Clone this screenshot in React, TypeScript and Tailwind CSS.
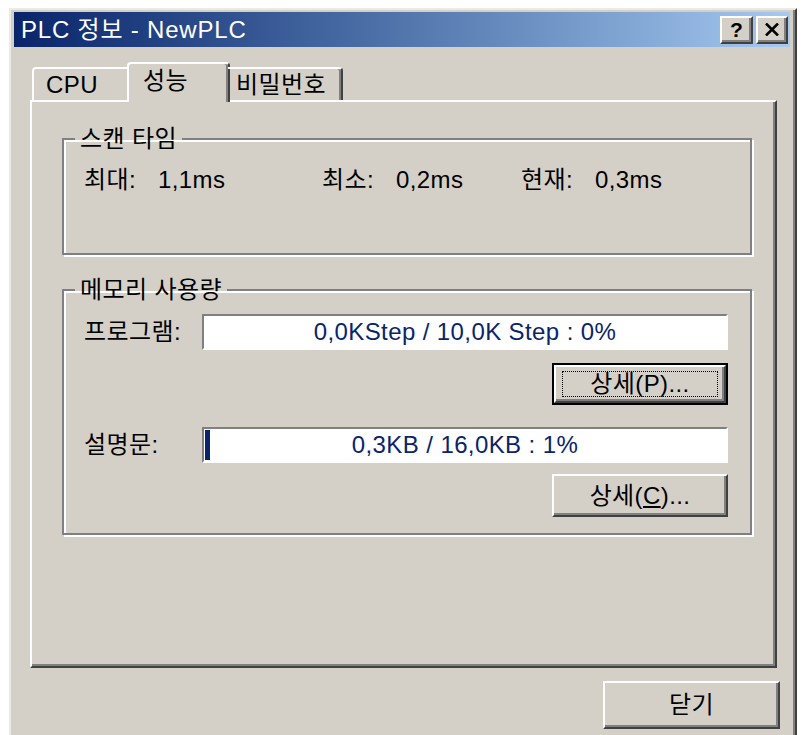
import type { ReactNode } from 'react';

const face = 'bg-[#d4d0c8]';

// Raised 3D push button, Win2k style
function PushButton({ children, isDefault, className }: { children: ReactNode; isDefault?: boolean; className?: string }) {
    const bevel = (
        <div className="flex h-full w-full items-center justify-center border-2 border-t-white border-l-white border-r-[#404040] border-b-[#404040] bg-[#d4d0c8] shadow-[inset_-2px_-2px_0_#808080]">
            {isDefault ? (
                <div className="flex h-[calc(100%-8px)] w-[calc(100%-12px)] items-center justify-center border border-dotted border-black">{children}</div>
            ) : (
                children
            )}
        </div>
    );
    return <div className={`${className ?? ''} ${isDefault ? 'border-2 border-black' : ''}`}>{bevel}</div>;
}

// Sunken progress field with centered caption
function ProgressField({ text, pct }: { text: string; pct: number }) {
    return (
        <div className="relative flex h-[36px] w-[526px] items-center justify-center border-2 border-t-[#808080] border-l-[#808080] border-r-white border-b-white bg-white">
            {pct > 0 && <div className="absolute left-[1px] top-[1px] bottom-[1px] bg-[#0a246a]" style={{ width: `${Math.max(4, pct * 5)}px` }} />}
            <span className="text-[#0a246a]">{text}</span>
        </div>
    );
}

function ScanValue({ label, value, className }: { label: string; value: string; className?: string }) {
    return (
        <span className={`flex ${className ?? ''}`}>
            <span>{label}:</span>
            <span className="ml-[22px]">{value}</span>
        </span>
    );
}

export default function App() {
    return (
        <div
            className="h-[735px] w-[805px] overflow-hidden bg-white text-[24px] leading-[26px] tracking-[0.4px] text-black"
            style={{ fontFamily: '"Liberation Sans", "Noto Sans CJK KR", sans-serif' }}
        >
            <div className={`ml-[9px] mt-[8px] flex h-[760px] w-[788px] flex-col border-l-2 border-t-2 border-r-2 border-l-[#eceae5] border-t-[#eceae5] border-r-[#404040] pl-[3px] pr-[5px] pt-[2px] shadow-[inset_-2px_0_0_#808080] ${face}`}>
                {/* title bar */}
                <div className="flex h-[35px] items-center justify-between bg-gradient-to-r from-[#0a246a] to-[#a6caf0] pl-[7px] pr-[2px]">
                    <span className="tracking-[0.8px] text-white">PLC 정보 - NewPLC</span>
                    <div className="flex gap-[3px] text-[21px] font-bold">
                        <PushButton className="h-[28px] w-[33px]">?</PushButton>
                        <PushButton className="h-[28px] w-[32px]">
                            <svg width="14" height="13" viewBox="0 0 14 13">
                                <path d="M1 0.5 L13 12.5 M13 0.5 L1 12.5" stroke="black" strokeWidth="2.6" />
                            </svg>
                        </PushButton>
                    </div>
                </div>

                <div className="flex flex-col pl-[16px] pr-[13px] pt-[15px]">
                    {/* tabs */}
                    <div className="relative z-10 flex items-end pl-[2px]">
                        <div className="flex h-[33px] w-[97px] items-center rounded-tl-[4px] border-l-2 border-t-2 border-white pl-[12px]">CPU</div>
                        <div className={`-mx-[2px] -mb-[2px] flex h-[40px] w-[103px] items-center rounded-t-[4px] border-l-2 border-t-2 border-r-2 border-l-white border-t-white border-r-[#404040] pb-[4px] pl-[14px] shadow-[inset_-2px_0_0_#808080] ${face}`}>성능</div>
                        <div className="flex h-[33px] w-[115px] items-center rounded-tr-[4px] border-t-2 border-r-2 border-t-white border-r-[#404040] pl-[8px] shadow-[inset_-2px_0_0_#808080]">비밀번호</div>
                    </div>

                    {/* tab page */}
                    <div className="flex h-[568px] flex-col border-2 border-t-white border-l-white border-r-[#404040] border-b-[#404040] pl-[30px] pt-[24px] shadow-[inset_-2px_-2px_0_#808080]">
                        <fieldset className="h-[129px] w-[690px] border-2 border-[#808080] shadow-[inset_2px_2px_0_white,2px_2px_0_white]">
                            <legend className="ml-[11px] px-[5px]">스캔 타임</legend>
                            <div className="mt-[15px] flex pl-[20px]">
                                <ScanValue className="w-[238px]" label="최대" value="1,1ms" />
                                <ScanValue className="w-[199px]" label="최소" value="0,2ms" />
                                <ScanValue label="현재" value="0,3ms" />
                            </div>
                        </fieldset>

                        <fieldset className="mt-[22px] h-[258px] w-[690px] border-2 border-[#808080] shadow-[inset_2px_2px_0_white,2px_2px_0_white]">
                            <legend className="ml-[11px] px-[5px]">메모리 사용량</legend>
                            <div className="mt-[11px] flex items-center pl-[20px]">
                                <span className="w-[118px]">프로그램:</span>
                                <ProgressField text="0,0KStep / 10,0K Step : 0%" pct={0} />
                            </div>
                            <div className="mt-[13px] flex justify-end pr-[22px]">
                                <PushButton isDefault className="h-[42px] w-[176px]">상세(P)...</PushButton>
                            </div>
                            <div className="mt-[22px] flex items-center pl-[20px]">
                                <span className="w-[118px]">설명문:</span>
                                <ProgressField text="0,3KB / 16,0KB : 1%" pct={1} />
                            </div>
                            <div className="mt-[11px] flex justify-end pr-[22px]">
                                <PushButton className="h-[43px] w-[176px]">
                                    <span>
                                        상세(<span className="underline underline-offset-2">C</span>)...
                                    </span>
                                </PushButton>
                            </div>
                        </fieldset>
                    </div>

                    <div className="mt-[13px] flex justify-end">
                        <PushButton className="-mr-[3px] h-[48px] w-[177px]">닫기</PushButton>
                    </div>
                </div>
            </div>
        </div>
    );
}
